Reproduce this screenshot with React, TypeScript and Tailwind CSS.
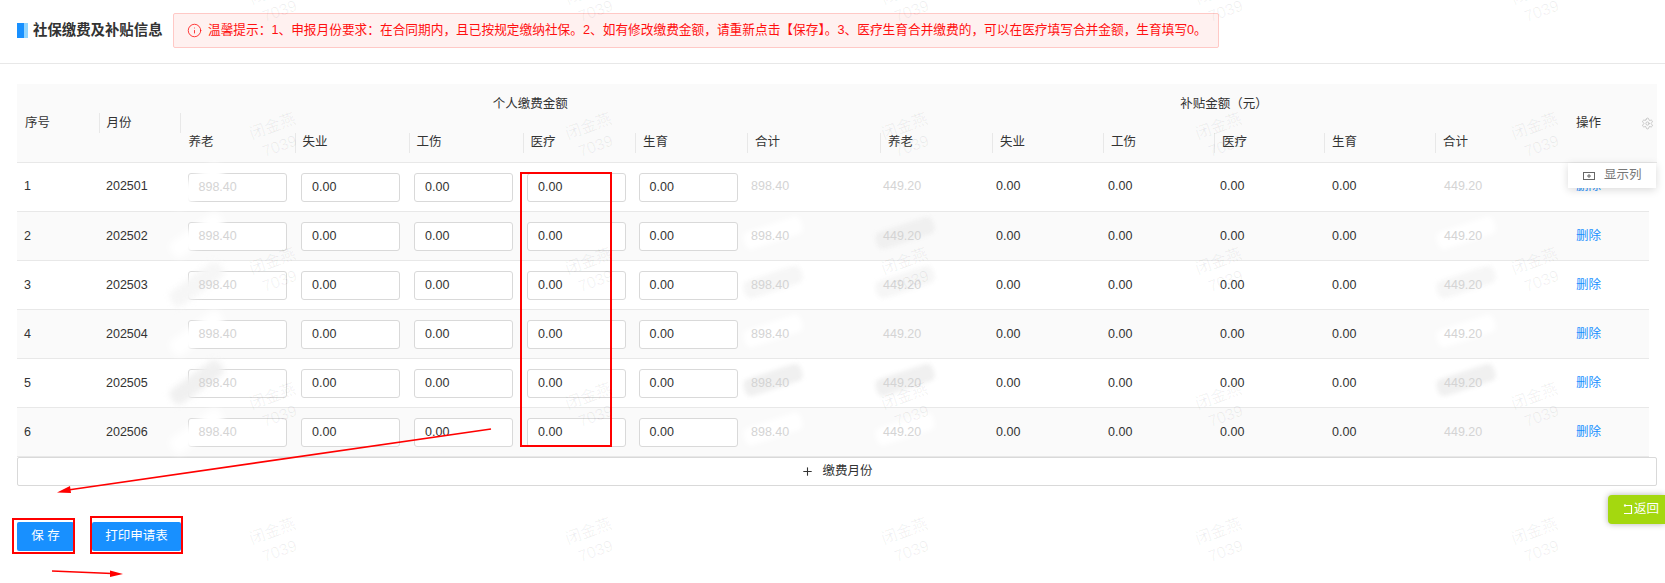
import { Info, Plus, Settings } from 'lucide-react'

const headCols = [81.5, 82, 114, 114, 114, 112.5, 112, 133, 112, 111, 111, 110, 111, 133, 89]
const bodyCols = [82, 81.5, 113.5, 113, 113, 111.5, 112.5, 132, 113, 112, 112, 112, 112, 132, 80]

const personal = ['养老', '失业', '工伤', '医疗', '生育', '合计']
const subsidy = ['养老', '失业', '工伤', '医疗', '生育', '合计']
const months = ['202501', '202502', '202503', '202504', '202505', '202506']

// 全角标点
const COLON = '\uFF1A'
const COMMA = '\uFF0C'
const notice = `温馨提示${COLON}1、申报月份要求${COLON}在合同期内${COMMA}且已按规定缴纳社保。2、如有修改缴费金额${COMMA}请重新点击【保存】。3、医疗生育合并缴费的${COMMA}可以在医疗填写合并金额${COMMA}生育填写0。`
const subsidyTitle = '补贴金额\uFF08元\uFF09'

type Tone = 'none' | 'white' | 'soft' | 'gray'

// 每行涂抹的深浅
const inputTones: Tone[] = ['white', 'white', 'soft', 'white', 'gray', 'white']
const totalTones: Tone[] = ['white', 'white', 'soft', 'white', 'gray', 'white']
const subsidyTones: Tone[] = ['none', 'gray', 'soft', 'none', 'gray', 'white']
const subsidyTotalTones: Tone[] = ['none', 'white', 'soft', 'white', 'gray', 'none']

const toneClass: Record<Tone, string> = {
  none: 'hidden',
  white: 'bg-white',
  soft: 'bg-[#f6f6f6]',
  gray: 'bg-[#f0f0f0]',
}

function Smear({ tone }: { tone: Tone }) {
  return (
    <span
      className={`absolute left-[-8px] top-[-3px] h-[18px] w-[60px] -rotate-[18deg] rounded-[6px] blur-[2px] ${toneClass[tone]}`}
    />
  )
}

function Masked({ value, tone }: { value: string; tone: Tone }) {
  return (
    <span className="relative inline-block">
      <Smear tone={tone} />
      <span className="relative text-[#d4d4d4]">{value}</span>
    </span>
  )
}

function AmountInput({ value, tone }: { value: string; tone?: Tone }) {
  return (
    <div
      className={`relative flex h-[29px] w-[99px] items-center rounded-[3px] border border-[#d9d9d9] bg-white pl-[10px] ${
        tone ? 'text-[#d4d4d4]' : 'text-[#333]'
      }`}
    >
      {tone && (
        <span className="absolute left-[-14px] top-[2px] h-[18px] w-[70px] -rotate-[18deg] rounded-[6px] blur-[2px]">
          <Smear tone={tone} />
        </span>
      )}
      <span className="relative">{value}</span>
    </div>
  )
}

function Watermarks() {
  const xs = [244, 560, 876, 1190, 1506]
  const ys = [-20, 115, 250, 385, 520]
  return (
    <div className="pointer-events-none absolute inset-0">
      {ys.map(y =>
        xs.map(x => (
          <div
            key={`${x}-${y}`}
            className="absolute w-[64px] -rotate-[20deg] text-center text-[16px] leading-[21px] text-black/[0.06]"
            style={{ left: x, top: y }}
          >
            <div>闭金燕</div>
            <div>7039</div>
          </div>
        ))
      )}
    </div>
  )
}

function Annotations() {
  return (
    <svg className="pointer-events-none absolute left-0 top-0" width="1665" height="583">
      <g fill="none" stroke="#f00" strokeWidth="2">
        <rect x="521" y="173" width="90" height="273" />
        <rect x="13" y="519" width="61" height="34" />
        <rect x="91" y="517" width="91" height="36" />
      </g>
      <path d="M491 429 L68 490" stroke="#f00" strokeWidth="1.6" />
      <path d="M57 492.5 L70 486 L71 493 Z" fill="#f00" />
      <path d="M52 571 L112 573.5" stroke="#f00" strokeWidth="1.6" />
      <path d="M123 574 L110 570.5 L110 577 Z" fill="#f00" />
    </svg>
  )
}

function Cols({ widths }: { widths: number[] }) {
  return (
    <colgroup>
      {widths.map((w, i) => (
        <col key={i} style={{ width: w }} />
      ))}
    </colgroup>
  )
}

export default function App() {
  const thSep =
    "relative h-[39px] px-2 text-left font-normal before:absolute before:left-0 before:top-[10px] before:h-[20px] before:w-px before:bg-[#e8e8e8] before:content-['']"

  return (
    <div className="relative h-[583px] w-[1665px] overflow-hidden bg-white font-[Liberation_Sans,Noto_Sans_CJK_SC,sans-serif] text-[12.5px] text-[#333]">
      {/* 标题 + 提示 */}
      <div className="flex h-[64px] items-start border-b border-[#e8e8e8] pl-[17px] pt-[13px]">
        <div className="flex h-[35px] items-center">
          <span className="h-[15px] w-[7px] bg-[#1890ff]" />
          <span className="h-[15px] w-[4px] bg-[#91d5ff]" />
          <h2 className="ml-[5px] w-[129px] whitespace-nowrap text-[14.4px] font-bold text-[#333]">社保缴费及补贴信息</h2>
        </div>
        <div className="ml-[11px] flex h-[35px] w-[1046px] items-center rounded-[2px] border border-[#ffc9c6] bg-[#fff1f0] pl-[13px] text-[12.7px] text-[#ff1010]">
          <Info className="mr-[6px] h-[15px] w-[15px] shrink-0" strokeWidth={1.3} />
          <span className="whitespace-nowrap">{notice}</span>
        </div>
      </div>

      <div className="ml-[17px] mt-[20px] w-[1640px]">
        {/* 表头 */}
        <table className="w-[1640px] table-fixed border-collapse">
          <Cols widths={headCols} />
          <thead className="bg-[#fafafa]">
            <tr>
              <th rowSpan={2} className="h-[78px] border-b border-[#e8e8e8] px-2 pt-[2px] text-left font-normal">
                序号
              </th>
              <th
                rowSpan={2}
                className="relative border-b border-[#e8e8e8] px-2 pt-[2px] text-left font-normal before:absolute before:left-0 before:top-[29px] before:h-[20px] before:w-px before:bg-[#e8e8e8] before:content-[''] after:absolute after:right-0 after:top-[29px] after:h-[20px] after:w-px after:bg-[#e8e8e8] after:content-['']"
              >
                月份
              </th>
              <th colSpan={6} className="h-[39px] pt-[2px] font-normal">
                个人缴费金额
              </th>
              <th colSpan={6} className="h-[39px] pt-[2px] font-normal">
                {subsidyTitle}
              </th>
              <th rowSpan={2} className="relative border-b border-[#e8e8e8] px-2 pt-[2px] text-left font-normal">
                操作
                <Settings className="absolute right-[3px] top-[33px] h-[13px] w-[13px] text-[#bbb]" strokeWidth={1.5} />
              </th>
            </tr>
            <tr className="border-b border-[#e8e8e8]">
              {personal.map((name, i) => (
                <th key={`p${i}`} className={i === 0 ? 'h-[39px] px-2 text-left font-normal' : thSep}>
                  {name}
                </th>
              ))}
              {subsidy.map((name, i) => (
                <th key={`s${i}`} className={thSep}>
                  {name}
                </th>
              ))}
            </tr>
          </thead>
        </table>

        {/* 表体 */}
        <table className="w-[1632px] table-fixed border-collapse">
          <Cols widths={bodyCols} />
          <tbody>
            {months.map((month, i) => (
              <tr key={month} className={`h-[49px] border-b border-[#e8e8e8] ${i % 2 === 1 ? 'bg-[#fafafa]' : 'bg-white'}`}>
                <td className="px-[7px]">{i + 1}</td>
                <td className="px-[7px]">{month}</td>
                <td className="px-[7px] pt-[1px]">
                  <AmountInput value="898.40" tone={inputTones[i]} />
                </td>
                <td className="px-[7px] pt-[1px]">
                  <AmountInput value="0.00" />
                </td>
                <td className="px-[7px] pt-[1px]">
                  <AmountInput value="0.00" />
                </td>
                <td className="px-[7px] pt-[1px]">
                  <AmountInput value="0.00" />
                </td>
                <td className="px-[7px] pt-[1px]">
                  <AmountInput value="0.00" />
                </td>
                <td className="px-[7px]">
                  <Masked value="898.40" tone={totalTones[i]} />
                </td>
                <td className="px-[7px]">
                  <Masked value="449.20" tone={subsidyTones[i]} />
                </td>
                <td className="px-[7px]">0.00</td>
                <td className="px-[7px]">0.00</td>
                <td className="px-[7px]">0.00</td>
                <td className="px-[7px]">0.00</td>
                <td className="px-[7px]">
                  <Masked value="449.20" tone={subsidyTotalTones[i]} />
                </td>
                <td className="px-[7px] text-[#1890ff]">删除</td>
              </tr>
            ))}
          </tbody>
        </table>

        <button className="flex h-[29px] w-[1640px] items-center justify-center gap-[8px] rounded-[2px] border border-[#d9d9d9] bg-white text-[#333]">
          <Plus className="h-[13px] w-[13px]" strokeWidth={2} />
          缴费月份
        </button>
      </div>

      {/* 底部按钮 */}
      <div className="ml-[17px] mt-[36px] flex gap-[18px]">
        <button className="h-[29px] w-[57px] rounded-[2px] bg-[#1890ff] text-white">保 存</button>
        <button className="h-[29px] w-[89px] rounded-[2px] bg-[#1890ff] text-white">打印申请表</button>
      </div>

      {/* 显示列 */}
      <div className="absolute left-[1568px] top-[163px] flex h-[25px] w-[88px] items-center bg-white pl-[15px] text-[#777] shadow-[0_2px_8px_rgba(0,0,0,0.15)]">
        <svg width="12" height="8" viewBox="0 0 12 8" className="mr-[9px]" fill="none" stroke="#666">
          <rect x="0.5" y="0.5" width="11" height="7" />
          <path d="M6 2v4M4 4h4" />
        </svg>
        显示列
      </div>

      {/* 返回 */}
      <div className="absolute left-[1608px] top-[495px] flex h-[29px] w-[57px] items-center rounded-l-[4px] bg-[#a4d80f] pl-[15px] text-white shadow-[0_0_6px_rgba(0,0,0,0.3)]">
        <svg width="10" height="11" viewBox="0 0 10 11" fill="none" stroke="#fff" strokeWidth="1.2" className="mr-[1px]">
          <path d="M1 1.5h7.5v8H1M1 1.5l1.5-1M1 1.5l1.5 1" />
        </svg>
        返回
      </div>

      <Annotations />
      <Watermarks />
    </div>
  )
}
